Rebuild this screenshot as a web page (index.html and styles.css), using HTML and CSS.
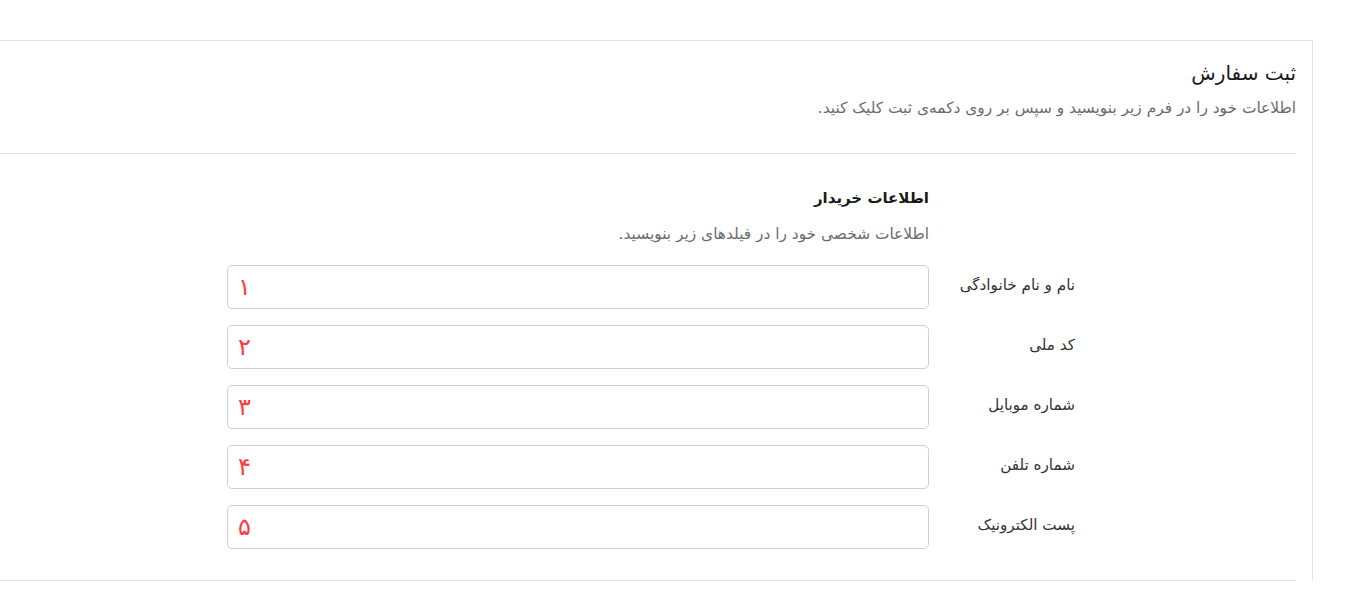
FILE: index.html
```html
<!DOCTYPE html>
<html lang="fa" dir="rtl">
<head>
  <meta charset="UTF-8" />
  <meta name="viewport" content="width=device-width, initial-scale=1.0"/>
  <title>ثبت سفارش</title>
  <link rel="stylesheet" href="styles.css">
</head>
<body>
  <div class="page">
    <div class="card">
      <div class="card-head">
        <h2>ثبت سفارش</h2>
        <p class="desc">اطلاعات خود را در فرم زیر بنویسید و سپس بر روی دکمه‌ی ثبت کلیک کنید.</p>
      </div>

      <div class="section">
        <div class="form-body">
          <div class="section-head">
            <h3>اطلاعات خریدار</h3>
            <p class="desc">اطلاعات شخصی خود را در فیلدهای زیر بنویسید.</p>
          </div>

          <div class="row">
            <label for="name">نام و نام خانوادگی</label>
            <input type="text" id="name" value="۱" dir="ltr" />
          </div>
          <div class="row">
            <label for="code">کد ملی</label>
            <input type="text" id="code" value="۲" dir="ltr" />
          </div>
          <div class="row">
            <label for="mobile">شماره موبایل</label>
            <input type="text" id="mobile" value="۳" dir="ltr" />
          </div>
          <div class="row">
            <label for="phone">شماره تلفن</label>
            <input type="text" id="phone" value="۴" dir="ltr" />
          </div>
          <div class="row">
            <label for="email">پست الکترونیک</label>
            <input type="text" id="email" value="۵" dir="ltr" />
          </div>
        </div>
      </div>
    </div>
  </div>
</body>
</html>
```

FILE: styles.css
```css
:root {
  --line: #e3e3e3;
  --text: #222;
  --muted: #6b6b6b;
  --input-border: #d0d0d0;
  --mark: #ff3b3b;
}

* {
  margin: 0;
  padding: 0;
  box-sizing: border-box;
  font-family: 'DejaVu Sans', sans-serif;
}

body {
  background: #fff;
  color: var(--text);
  overflow: hidden;
}

.page {
  padding: 40px 35px 0 0;
}

.card {
  width: 1500px;
  border-top: 1px solid var(--line);
  border-right: 1px solid var(--line);
  padding: 0 16px;
}

.card-head {
  padding: 17px 0 35px;
  border-bottom: 1px solid var(--line);
}

.card-head h2 {
  font-size: 20px;
  line-height: 30px;
  font-weight: 400;
  color: #1a1a1a;
}

.desc {
  font-size: 15.4px;
  line-height: 20px;
  color: var(--muted);
  margin-top: 10px;
}

.section {
  padding: 32px 0 31px;
  border-bottom: 1px solid var(--line);
}

.form-body {
  width: 848px;
  margin-right: 221px;
  display: flex;
  flex-direction: column;
  gap: 16px;
}

.section-head {
  margin-right: 146px;
  margin-bottom: 5px;
}

.section-head h3 {
  font-size: 15px;
  line-height: 24px;
  font-weight: 600;
  color: #1a1a1a;
}

.section-head .desc {
  margin-top: 14px;
}

.row {
  display: grid;
  grid-template-columns: 130px 702px;
  gap: 16px;
  align-items: center;
}

.row label {
  font-size: 15.2px;
  color: #333;
  padding-bottom: 5px;
}

.row input {
  height: 44px;
  border: 1px solid var(--input-border);
  border-radius: 5px;
  background: #fff;
  padding: 0 10px;
  font-size: 24px;
  color: var(--mark);
  text-align: left;
  outline: none;
}
```
